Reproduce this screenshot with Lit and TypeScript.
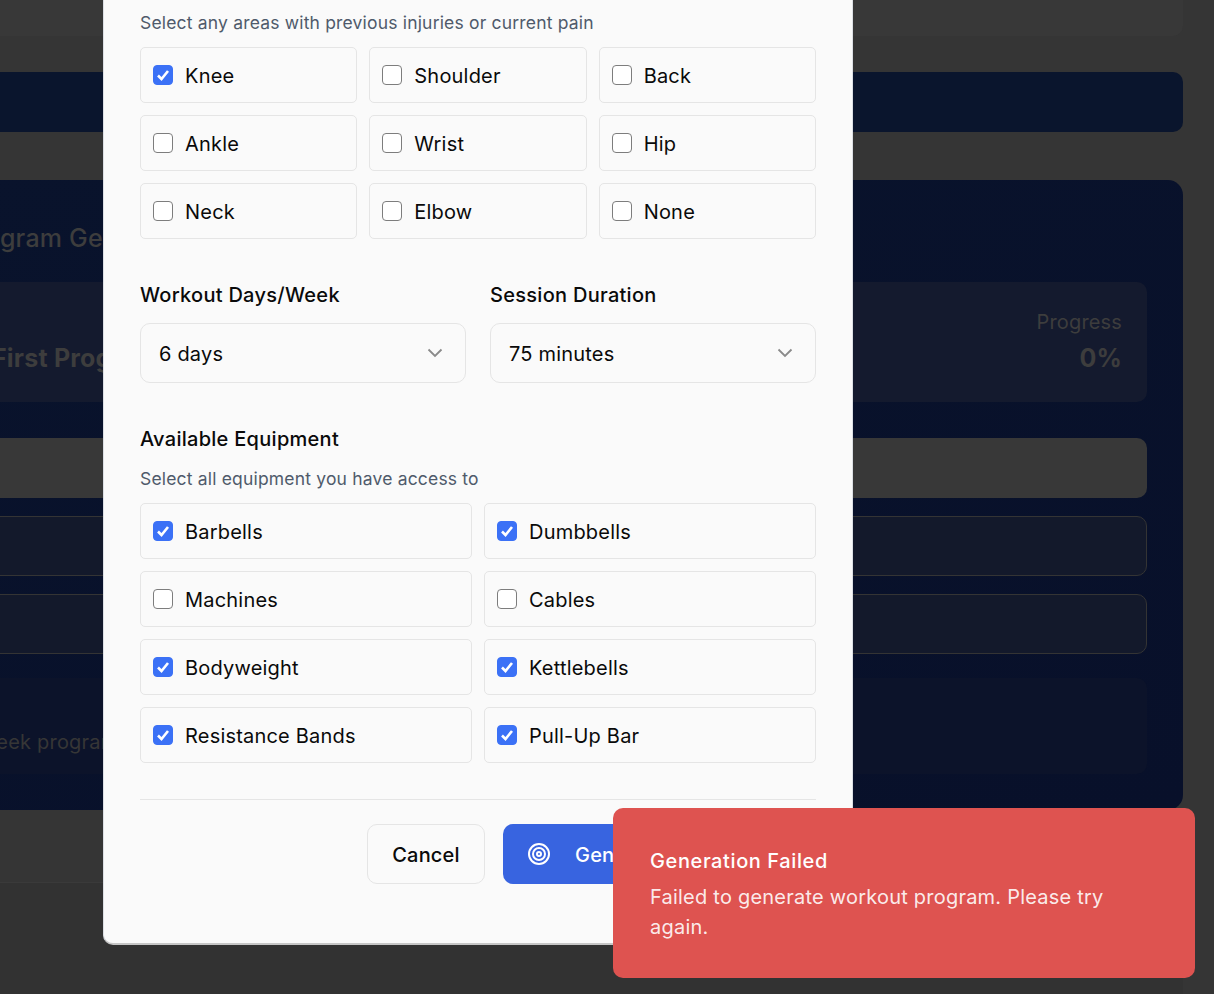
import { LitElement, html, css } from "lit";
import { customElement } from "lit/decorators.js";

const injuries = [
  { label: "Knee", checked: true },
  { label: "Shoulder", checked: false },
  { label: "Back", checked: false },
  { label: "Ankle", checked: false },
  { label: "Wrist", checked: false },
  { label: "Hip", checked: false },
  { label: "Neck", checked: false },
  { label: "Elbow", checked: false },
  { label: "None", checked: false },
];

const equipment = [
  { label: "Barbells", checked: true },
  { label: "Dumbbells", checked: true },
  { label: "Machines", checked: false },
  { label: "Cables", checked: false },
  { label: "Bodyweight", checked: true },
  { label: "Kettlebells", checked: true },
  { label: "Resistance Bands", checked: true },
  { label: "Pull-Up Bar", checked: true },
];

@customElement("app-root")
export class AppRoot extends LitElement {
  static styles = css`
    :host {
      display: block;
      position: relative;
      width: 1214px;
      height: 994px;
      overflow: hidden;
      background: #353535;
      font-family: Inter, "Liberation Sans", sans-serif;
      color: #0a0a0a;
      letter-spacing: 0.2px;
    }
    .page {
      width: 1264px;
      margin-left: -81px;
      display: flex;
      flex-direction: column;
    }
    .top-strip {
      height: 36px;
      background: #383838;
      border-radius: 0 0 10px 10px;
    }
    .band {
      height: 60px;
      margin-top: 36px;
      background: #0a152d;
      border-radius: 10px;
    }
    .hero {
      height: 630px;
      margin-top: 48px;
      padding: 40px 36px 36px;
      box-sizing: border-box;
      background: linear-gradient(160deg, #09132c, #08102a);
      border-radius: 15px;
      display: flex;
      flex-direction: column;
    }
    .hero h2 {
      margin: 0;
      height: 36px;
      padding-left: 4px;
      font-size: 25px;
      line-height: 36px;
      font-weight: 500;
      color: #3d3d3d;
      white-space: nowrap;
    }
    .stats {
      height: 120px;
      margin-top: 26px;
      padding: 0 25px 29px 37px;
      background: #141a2e;
      border-radius: 10px;
      display: flex;
      justify-content: space-between;
      align-items: flex-end;
      box-sizing: border-box;
      color: #3d3d3d;
    }
    .stats b {
      display: block;
      font-size: 25px;
      line-height: 30px;
      font-weight: 700;
      white-space: nowrap;
    }
    .progress {
      text-align: right;
      font-size: 20px;
      line-height: 30px;
      letter-spacing: 0.15px;
    }
    .progress span {
      display: block;
      margin-bottom: 6px;
    }
    .row-light {
      height: 60px;
      margin-top: 36px;
      background: #383838;
      border-radius: 10px;
    }
    .row-dark {
      height: 60px;
      margin-top: 18px;
      box-sizing: border-box;
      background: #13192b;
      border: 1px solid #343434;
      border-radius: 10px;
    }
    .note {
      height: 96px;
      margin-top: 24px;
      padding-top: 49px;
      box-sizing: border-box;
      background: #0c132a;
      border-radius: 10px;
      font-size: 20px;
      line-height: 30px;
      color: #363636;
      white-space: nowrap;
      text-indent: -5px;
    }
    .footer {
      margin-top: 72px;
      height: 112px;
      background: #323232;
      border-top: 1px solid #3a3a3a;
    }
    .modal {
      position: absolute;
      left: 103px;
      top: 0;
      width: 750px;
      height: 945px;
      box-sizing: border-box;
      padding: 10px 36px 0;
      background: #fafafa;
      border: 1px solid #dcdfe4;
      border-top: 0;
      border-bottom: 2px solid #c6c6c6;
      border-radius: 0 0 10px 10px;
    }
    .hint {
      margin: 0;
      font-size: 17.5px;
      line-height: 26px;
      color: #4f5a6b;
      letter-spacing: 0.18px;
    }
    .grid {
      display: grid;
      gap: 12px;
      margin-top: 11px;
    }
    .grid.three {
      grid-template-columns: repeat(3, 1fr);
    }
    .grid.two {
      grid-template-columns: repeat(2, 1fr);
    }
    .option {
      height: 56px;
      box-sizing: border-box;
      padding: 2px 12px 0;
      display: flex;
      align-items: center;
      gap: 12px;
      background: #fafafa;
      border: 1px solid #e5e5e5;
      border-radius: 5px;
      font-size: 20px;
    }
    .box {
      width: 20px;
      height: 20px;
      margin-top: -2px;
      box-sizing: border-box;
      flex: none;
      background: #fff;
      border: 1.5px solid #7d7d7d;
      border-radius: 4px;
      display: flex;
      align-items: center;
      justify-content: center;
    }
    .box.on {
      background: #3b71f6;
      border-color: #3b71f6;
    }
    .selects {
      display: grid;
      grid-template-columns: repeat(2, 1fr);
      gap: 24px;
      margin-top: 40px;
    }
    .label {
      display: block;
      font-size: 20px;
      line-height: 32px;
      font-weight: 500;
      letter-spacing: 0.28px;
    }
    .select {
      margin-top: 12px;
      height: 60px;
      box-sizing: border-box;
      padding: 2px 22px 0 18px;
      display: flex;
      align-items: center;
      justify-content: space-between;
      border: 1px solid #e5e5e5;
      border-radius: 10px;
      font-size: 20px;
    }
    .select svg {
      margin-top: -2px;
    }
    .equipment {
      margin-top: 40px;
    }
    .equipment .hint {
      margin-top: 11px;
    }
    .actions {
      margin-top: 36px;
      padding-top: 24px;
      border-top: 1px solid #e5e5e5;
      display: flex;
      justify-content: flex-end;
      gap: 18px;
    }
    .btn {
      height: 60px;
      box-sizing: border-box;
      border-radius: 10px;
      display: flex;
      align-items: center;
      font-size: 20px;
      font-weight: 500;
    }
    .btn span {
      padding-top: 2px;
    }
    .cancel {
      width: 118px;
      justify-content: center;
      border: 1px solid #e5e5e5;
    }
    .generate {
      width: 313px;
      padding-left: 24px;
      gap: 24px;
      background: #3864e0;
      color: #fff;
    }
    .toast {
      position: absolute;
      left: 613px;
      top: 808px;
      width: 582px;
      height: 170px;
      box-sizing: border-box;
      padding: 37px 37px 0;
      background: #de5350;
      border-radius: 10px;
      color: #fff;
      font-size: 20px;
    }
    .toast strong {
      display: block;
      font-weight: 500;
      line-height: 32px;
      letter-spacing: 0.6px;
    }
    .toast p {
      margin: 5px 0 0;
      line-height: 30px;
      font-weight: 400;
      letter-spacing: 0.22px;
      color: rgba(255, 255, 255, 0.9);
    }
  `;

  renderOption(o: { label: string; checked: boolean }) {
    return html`<div class="option">
      <span class="box ${o.checked ? "on" : ""}">
        ${o.checked
          ? html`<svg width="14" height="14" viewBox="0 0 14 14" fill="none">
              <path d="M2 7.5 5.5 11 12 3" stroke="#fff" stroke-width="2.6" />
            </svg>`
          : ""}
      </span>
      <span>${o.label}</span>
    </div>`;
  }

  renderSelect(label: string, value: string) {
    return html`<div>
      <span class="label">${label}</span>
      <div class="select">
        <span>${value}</span>
        <svg width="16" height="10" viewBox="0 0 16 10" fill="none">
          <path d="M1.5 1.5 8 8l6.5-6.5" stroke="#8a8a8a" stroke-width="1.8" />
        </svg>
      </div>
    </div>`;
  }

  render() {
    return html`
      <div class="page">
        <div class="top-strip"></div>
        <div class="band"></div>
        <section class="hero">
          <h2>Program Generator</h2>
          <div class="stats">
            <b>First Program</b>
            <div class="progress"><span>Progress</span><b>0%</b></div>
          </div>
          <div class="row-light"></div>
          <div class="row-dark"></div>
          <div class="row-dark"></div>
          <div class="note">12-week program</div>
        </section>
        <div class="footer"></div>
      </div>

      <div class="modal">
        <p class="hint">Select any areas with previous injuries or current pain</p>
        <div class="grid three">${injuries.map((o) => this.renderOption(o))}</div>
        <div class="selects">
          ${this.renderSelect("Workout Days/Week", "6 days")}
          ${this.renderSelect("Session Duration", "75 minutes")}
        </div>
        <div class="equipment">
          <span class="label">Available Equipment</span>
          <p class="hint">Select all equipment you have access to</p>
          <div class="grid two">${equipment.map((o) => this.renderOption(o))}</div>
        </div>
        <div class="actions">
          <div class="btn cancel"><span>Cancel</span></div>
          <div class="btn generate">
            <svg width="24" height="24" viewBox="0 0 24 24" fill="none" stroke="#fff" stroke-width="2">
              <circle cx="12" cy="12" r="10" />
              <circle cx="12" cy="12" r="6" />
              <circle cx="12" cy="12" r="2" />
            </svg>
            <span>Generate Program</span>
          </div>
        </div>
      </div>

      <div class="toast">
        <strong>Generation Failed</strong>
        <p>Failed to generate workout program. Please try again.</p>
      </div>
    `;
  }
}
